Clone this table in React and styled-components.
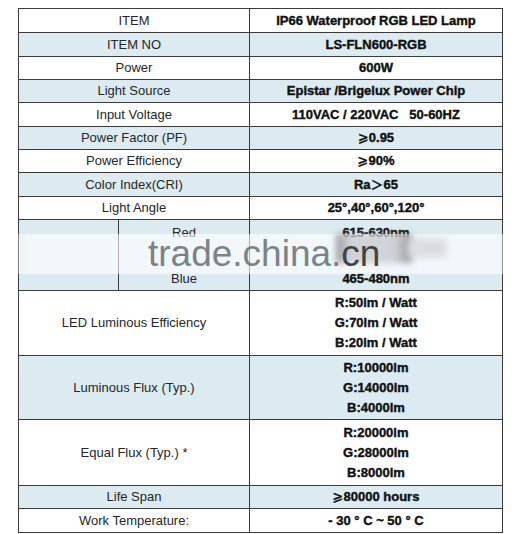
import React from "react";
import styled, { createGlobalStyle } from "styled-components";

const Global = createGlobalStyle`
  html, body { margin: 0; padding: 0; background: #ffffff; }
  body { font-family: "Liberation Sans", Arial, sans-serif; }
`;

const Page = styled.div`
  position: relative;
  width: 525px;
  height: 534px;
  padding: 8px 0 0 18px;
  box-sizing: border-box;
  overflow: hidden;
`;

const Table = styled.table`
  border-collapse: collapse;
  width: 484px;
  table-layout: fixed;
  color: #1f1f1f;
`;

const Row = styled.tr`
  background: ${(p) => (p.$shade ? "#dcebf2" : "#ffffff")};
  height: ${(p) => p.$h}px;
`;

const Cell = styled.td`
  border: 1px solid #3a3a3a;
  padding: 0;
  text-align: center;
  vertical-align: middle;
  font-size: 13px;
  line-height: 20px;
  white-space: nowrap;
`;

const Label = styled(Cell)`
  font-weight: 400;
  color: #262626;
`;

const Value = styled(Cell)`
  font-weight: 700;
  color: #111;
  -webkit-text-stroke: 0.4px #111;
  line-height: ${(p) => (p.$lh ? p.$lh : 20)}px;
`;

const Sub = styled(Cell)`
  line-height: 23px;
  color: #262626;
`;

const Sym = styled.span`
  font-family: "DejaVu Sans", "Noto Sans CJK SC", sans-serif;
  font-weight: 700;
  font-size: 13px;
  -webkit-text-stroke: 0.2px #111;
`;

const Lines = styled.div`
  display: flex;
  flex-direction: column;
  align-items: center;
`;

const Gap = styled.span`
  display: block;
  height: ${(p) => p.$h}px;
`;

const Watermark = styled.div`
  position: absolute;
  left: 0;
  top: 234px;
  width: 525px;
  height: 40px;
  background: linear-gradient(
    to right,
    rgba(255, 255, 255, 0.1) 10px,
    rgba(255, 255, 255, 0.6) 26px,
    rgba(255, 255, 255, 0.6) 498px,
    rgba(255, 255, 255, 0.1) 515px
  );
  pointer-events: none;
`;

const Smudge = styled.div`
  position: absolute;
  left: 336px;
  top: 234px;
  width: 76px;
  height: 29px;
  background: linear-gradient(
    to right,
    rgba(110, 110, 115, 0.7) 0px,
    rgba(175, 175, 180, 0.5) 14px,
    rgba(175, 175, 180, 0.5) 58px,
    rgba(110, 110, 115, 0.7) 76px
  );
  filter: blur(3px);
  pointer-events: none;
`;

const Smudge2 = styled.div`
  position: absolute;
  left: 408px;
  top: 239px;
  width: 38px;
  height: 18px;
  background: rgba(215, 218, 222, 0.95);
  filter: blur(3px);
  pointer-events: none;
`;

const Mark = styled.div`
  position: absolute;
  z-index: 2;
  left: 148px;
  top: 240px;
  white-space: nowrap;
  font-family: "Liberation Sans", Arial, sans-serif;
  font-size: 37px;
  line-height: 28px;
  color: #7b8388;
  pointer-events: none;
`;

const Dark = styled.span`
  color: #3e4347;
`;

const rows = [
  { label: "ITEM", value: "IP66 Waterproof RGB LED Lamp", h: 24 },
  { label: "ITEM NO", value: "LS-FLN600-RGB", h: 24 },
  { label: "Power", value: "600W", h: 23 },
  { label: "Light Source", value: "Epistar /Brigelux Power Chip", h: 23 },
  { label: "Input Voltage", value: "110VAC / 220VAC\u00a0\u00a0\u00a050-60HZ", h: 24 },
  { label: "Power Factor (PF)", value: [<Sym key="s">⩾</Sym>, "0.95"], h: 23 },
  { label: "Power Efficiency", value: [<Sym key="s">⩾</Sym>, "90%"], h: 23 },
  { label: "Color Index(CRI)", value: ["Ra", <Sym key="s">＞</Sym>, "65"], h: 24 },
  { label: "Light Angle", value: "25°,40°,60°,120°", h: 23 },
];

const multi = [
  { label: "LED Luminous Efficiency", lines: ["R:50lm / Watt", "G:70lm / Watt", "B:20lm / Watt"], h: 65 },
  { label: "Luminous Flux (Typ.)", lines: ["R:10000lm", "G:14000lm", "B:4000lm"], h: 64 },
  { label: "Equal Flux (Typ.) *", lines: ["R:20000lm", "G:28000lm", "B:8000lm"], h: 66 },
];

const tail = [
  { label: "Life Span", value: [<Sym key="s">⩾</Sym>, "80000 hours"], h: 23 },
  { label: "Work Temperature:", value: "- 30 ° C ~ 50 ° C", h: 24 },
];

export default function App() {
  let shade = false;
  const next = () => {
    const s = shade;
    shade = !shade;
    return s;
  };
  return (
    <>
      <Global />
      <Page>
        <Table>
          <colgroup>
            <col style={{ width: 100 }} />
            <col style={{ width: 131 }} />
            <col style={{ width: 253 }} />
          </colgroup>
          <tbody>
            {rows.map((r) => (
              <Row key={r.label} $shade={next()} $h={r.h}>
                <Label colSpan={2}>{r.label}</Label>
                <Value>{r.value}</Value>
              </Row>
            ))}
            <Row $shade={next()} $h={71}>
              <Cell />
              <Sub>
                <Lines>
                  <span>Red</span>
                  <Gap $h={23} />
                  <span>Blue</span>
                </Lines>
              </Sub>
              <Value $lh={23}>
                <Lines>
                  <span>615-630nm</span>
                  <Gap $h={23} />
                  <span>465-480nm</span>
                </Lines>
              </Value>
            </Row>
            {multi.map((r) => (
              <Row key={r.label} $shade={next()} $h={r.h}>
                <Label colSpan={2}>{r.label}</Label>
                <Value>
                  <Lines>
                    {r.lines.map((l) => (
                      <span key={l}>{l}</span>
                    ))}
                  </Lines>
                </Value>
              </Row>
            ))}
            {tail.map((r) => (
              <Row key={r.label} $shade={next()} $h={r.h}>
                <Label colSpan={2}>{r.label}</Label>
                <Value>{r.value}</Value>
              </Row>
            ))}
          </tbody>
        </Table>
        <Watermark />
        <Smudge />
        <Smudge2 />
        <Mark>
          trade.china.<Dark>cn</Dark>
        </Mark>
      </Page>
    </>
  );
}
